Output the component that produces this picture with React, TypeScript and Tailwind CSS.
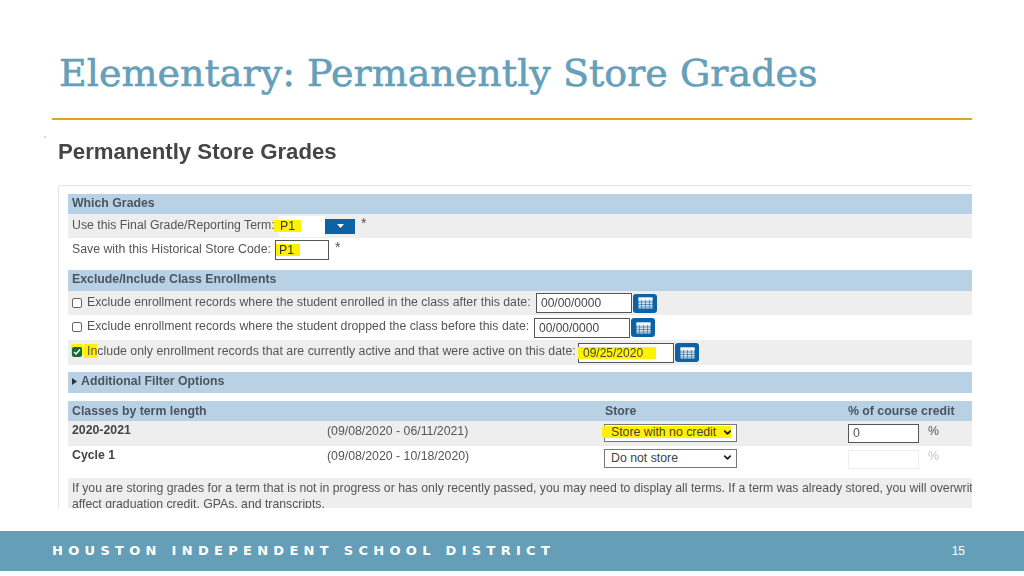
import { ChevronDown } from 'lucide-react';

function CalendarButton() {
  return (
    <div className="w-[24px] h-[19px] rounded-[3px] bg-[#0b62a4] flex items-center justify-center shrink-0">
      <svg width="15" height="12" viewBox="0 0 15 12">
        <rect x="0.5" y="0.5" width="14" height="11" fill="#dbe7f0" />
        <rect x="0.5" y="0.5" width="14" height="2.5" fill="#f4f8fb" />
        <path d="M0 5h15M0 7.5h15M0 10h15M3.5 3v9M7.5 3v9M11.5 3v9" stroke="#3b7fb3" strokeWidth="0.8" />
      </svg>
    </div>
  );
}

function DateField({ value, highlight }: { value: string; highlight?: boolean }) {
  return (
    <div className="flex items-center gap-[1px]">
      <div className="w-[96px] h-[20px] bg-white border border-[#555] flex items-center pl-[4px] text-[12px] text-[#444]">
        {highlight ? <span className="bg-[#fff200] leading-[12px] pr-[13px] pl-[5px] -ml-[5px]">{value}</span> : value}
      </div>
      <CalendarButton />
    </div>
  );
}

function SectionHeader({ children, className = '' }: { children: React.ReactNode; className?: string }) {
  return <div className={`h-[20px] bg-[#b8d1e5] flex items-center px-[4px] pb-[2px] text-[12.3px] font-bold text-[#4a5560] ${className}`}>{children}</div>;
}

function Checkbox({ checked }: { checked?: boolean }) {
  if (checked) {
    return (
      <span className="w-[10px] h-[10px] mb-[1px] rounded-[2px] bg-[#0f6b3a] flex items-center justify-center shrink-0 shadow-[0_-2px_0_1px_#fff200]">
        <svg width="8" height="8" viewBox="0 0 8 8"><path d="M1 4l2 2 4-4.5" fill="none" stroke="#fff" strokeWidth="1.5" /></svg>
      </span>
    );
  }
  return <span className="w-[10px] h-[10px] mb-[1px] rounded-[2px] bg-white border border-[#666] shrink-0" />;
}

export default function App() {
  return (
    <div className="relative w-[1024px] h-[576px] bg-white flex flex-col overflow-hidden font-['Liberation_Sans',Arial,sans-serif]">
      <span className="absolute left-[44px] top-[136px] w-[2px] h-[2px] bg-[#d8d8d8]" />
      <div className="h-[118px] pl-[59px] pt-[50px] shrink-0">
        <h1 className="font-['DejaVu_Serif',serif] text-[38px] leading-[46px] text-[#659fb9] whitespace-nowrap tracking-[0.02px] [-webkit-text-stroke:0.6px_#659fb9]">Elementary: Permanently Store Grades</h1>
      </div>
      <div className="mx-[52px] h-[2px] bg-[#dfa620] shrink-0" />

      <div className="ml-[58px] w-[914px] h-[388px] overflow-hidden shrink-0 blur-[0.5px]">
        <h2 className="mt-[20px] h-[24px] text-[22.2px] leading-[24px] font-bold text-[#454545] whitespace-nowrap">Permanently Store Grades</h2>
        <div className="mt-[21px] h-[323px] border-t border-l border-[#e4e4e4] rounded-tl-[3px] pl-[9px] pt-[8px] overflow-hidden text-[12.3px] text-[#555]">
          <SectionHeader>Which Grades</SectionHeader>
          <div className="h-[24px] bg-[#eeeeee] flex items-center px-[4px]">
            <span className="w-[207px] pb-[2px] whitespace-nowrap">Use this Final Grade/Reporting Term:</span>
            <div className="w-[46px] h-[21px] bg-white flex items-center text-[#333]">
              <span className="bg-[#fff200] leading-[12px] pr-[6px] -ml-[5px] pl-[6px]">P1</span>
            </div>
            <div className="w-[30px] h-[15px] bg-[#0b62a4] flex items-center justify-center">
              <svg width="7" height="4" viewBox="0 0 7 4"><path d="M0 0h7L3.5 4z" fill="#fff" /></svg>
            </div>
            <span className="ml-[6px] -mt-[6px] text-[14px]">*</span>
          </div>
          <div className="h-[24px] bg-white flex items-center px-[4px]">
            <span className="w-[203px] pb-[2px] whitespace-nowrap">Save with this Historical Store Code:</span>
            <div className="w-[54px] h-[20px] bg-white border border-[#555] flex items-center text-[#333]">
              <span className="bg-[#fff200] leading-[12px] pr-[6px] pl-[3px]">P1</span>
            </div>
            <span className="ml-[6px] -mt-[6px] text-[14px]">*</span>
          </div>

          <SectionHeader className="mt-[8px] h-[21px]">Exclude/Include Class Enrollments</SectionHeader>
          <div className="h-[24px] bg-[#eeeeee] flex items-center px-[4px]">
            <Checkbox />
            <span className="ml-[5px] w-[449px] pb-[2px] whitespace-nowrap">Exclude enrollment records where the student enrolled in the class after this date:</span>
            <DateField value="00/00/0000" />
          </div>
          <div className="h-[25px] bg-white flex items-center px-[4px]">
            <Checkbox />
            <span className="ml-[5px] w-[447px] pb-[2px] whitespace-nowrap">Exclude enrollment records where the student dropped the class before this date:</span>
            <DateField value="00/00/0000" />
          </div>
          <div className="h-[25px] bg-[#eeeeee] flex items-center px-[4px]">
            <Checkbox checked />
            <span className="ml-[5px] w-[491px] pb-[3px] whitespace-nowrap tracking-[0.03px]"><span className="bg-[#fff200] -ml-[3px] pl-[3px]">In</span>clude only enrollment records that are currently active and that were active on this date:</span>
            <DateField value="09/25/2020" highlight />
          </div>

          <SectionHeader className="mt-[7px] h-[21px] gap-[4px]">
            <svg width="5" height="7" viewBox="0 0 5 7" className="shrink-0"><path d="M0 0l5 3.5L0 7z" fill="#333" /></svg>
            Additional Filter Options
          </SectionHeader>

          <div className="mt-[8px] h-[20px] bg-[#b8d1e5] grid grid-cols-[532px_244px_1fr] items-center px-[4px] font-bold text-[#4a5560]">
            <span>Classes by term length</span>
            <span className="pl-[1px]">Store</span>
            <span className="whitespace-nowrap">% of course credit</span>
          </div>
          <div className="h-[25px] bg-[#eeeeee] grid grid-cols-[255px_277px_244px_1fr] items-center px-[4px]">
            <span className="font-bold text-[#444] pb-[8px]">2020-2021</span>
            <span className="pb-[6px]">(09/08/2020 - 06/11/2021)</span>
            <div className="relative w-[133px] h-[18px] -translate-y-px bg-white border border-[#777] flex items-center justify-between pl-[6px] pr-[3px] text-[#444] pb-[2px]">
              <span className="absolute -left-[3px] top-[1px] w-[129px] h-[12px] bg-[#fff200] rounded-l-[3px]" />
              <span className="relative whitespace-nowrap">Store with no credit</span>
              <ChevronDown className="relative" size={11} strokeWidth={4} color="#222" />
            </div>
            <div className="flex items-center -translate-y-px">
              <div className="w-[71px] h-[19px] bg-white border border-[#555] flex items-center pl-[4px]">0</div>
              <span className="ml-[9px] -mt-[5px]">%</span>
            </div>
          </div>
          <div className="h-[25px] bg-white grid grid-cols-[255px_277px_244px_1fr] items-center px-[4px]">
            <span className="font-bold text-[#444] pb-[8px]">Cycle 1</span>
            <span className="pb-[6px]">(09/08/2020 - 10/18/2020)</span>
            <div className="w-[133px] h-[19px] -translate-y-px bg-white border border-[#777] flex items-center justify-between pl-[6px] pr-[3px] text-[#444] pb-[1px]">
              <span>Do not store</span>
              <ChevronDown size={11} strokeWidth={4} color="#222" />
            </div>
            <div className="flex items-center">
              <div className="w-[71px] h-[19px] bg-white border border-[#eeeeee]" />
              <span className="ml-[9px] -mt-[6px] text-[#c4c4c4]">%</span>
            </div>
          </div>
          <div className="mt-[7px] h-[30px] bg-[#eeeeee] px-[4px] pt-[2px] text-[12.25px] leading-[16px] whitespace-nowrap overflow-hidden">
            <div>If you are storing grades for a term that is not in progress or has only recently passed, you may need to display all terms. If a term was already stored, you will overwrite</div>
            <div>affect graduation credit, GPAs, and transcripts.</div>
          </div>
        </div>
      </div>

      <div className="mt-[23px] h-[40px] bg-[#659fb7] flex items-center justify-between pl-[52px] pr-[59px] shrink-0">
        <span className="font-['DejaVu_Sans',sans-serif] font-bold text-[13px] tracking-[5.3px] text-white whitespace-nowrap">HOUSTON INDEPENDENT SCHOOL DISTRICT</span>
        <span className="text-[12px] text-white">15</span>
      </div>
    </div>
  );
}
